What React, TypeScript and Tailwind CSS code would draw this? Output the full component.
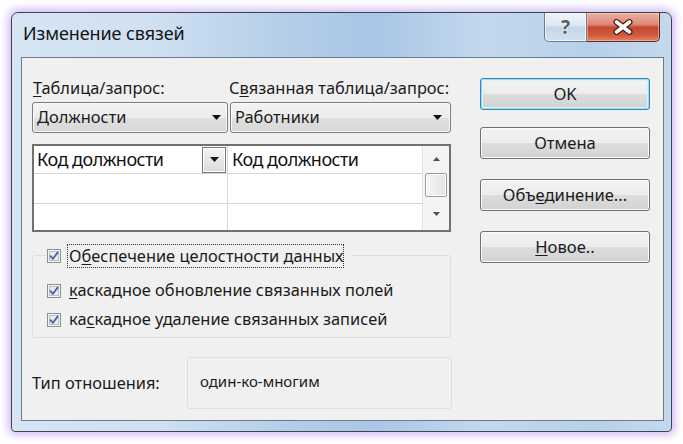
import React from "react";

const FONT = { fontFamily: '"Noto Sans", "Open Sans", sans-serif' };

function CheckBox() {
  return (
    <svg width="14" height="14" viewBox="0 0 14 14" className="shrink-0">
      <rect x="0.5" y="0.5" width="13" height="13" fill="#f6f6f6" stroke="#8e8f8f" />
      <rect x="2.5" y="2.5" width="9" height="9" fill="#e9ecef" stroke="#b8bec6" />
      <path d="M3.6 7.2 L5.9 9.8 L10.6 3.6" stroke="#4e66a0" strokeWidth="1.9" fill="none" strokeLinecap="round" strokeLinejoin="round" />
    </svg>
  );
}

function Arrow({ up = false }: { up?: boolean }) {
  return (
    <svg width="9" height="5" viewBox="0 0 9 5">
      <polygon points={up ? "0,5 9,5 4.5,0" : "0,0 9,0 4.5,5"} fill="#111" />
    </svg>
  );
}

function SmallArrow({ up = false }: { up?: boolean }) {
  return (
    <svg width="7" height="4" viewBox="0 0 7 4">
      <polygon points={up ? "0,4 7,4 3.5,0" : "0,0 7,0 3.5,4"} fill="#505050" />
    </svg>
  );
}

function Button({ children, focus = false, mt }: { children: React.ReactNode; focus?: boolean; mt: string }) {
  return (
    <div
      className={
        "h-[32px] w-[170px] rounded-[3px] border flex items-center justify-center text-[16.6px] text-[#1b1b1b] bg-[linear-gradient(180deg,#f3f3f3_0%,#ececec_50%,#dddddd_51%,#d2d2d2_100%)] " +
        (focus
          ? "border-[#3c7fb1] shadow-[inset_0_0_0_1px_#8fe0f8,inset_0_0_0_2px_#d8f3fb] "
          : "border-[#707070] shadow-[inset_0_0_0_1px_#fbfbfb] ") +
        mt
      }
    >
      {children}
    </div>
  );
}

export default function App() {
  return (
    <div className="w-[683px] h-[444px] bg-white overflow-hidden pl-[11px] pt-[12px]" style={FONT}>
      <div className="w-[661px] h-[420px] rounded-t-[7px] rounded-b-[4px] border border-[#3c4650] flex flex-col shadow-[0_0_8px_3px_rgba(196,168,238,0.8)] bg-[linear-gradient(90deg,#d6e5f4_0%,#cfe0f2_22%,#b6cfe9_40%,#a9c6e6_55%,#c3d8ee_72%,#b7d0ea_88%,#c4d9ee_100%)]">
        {/* title bar */}
        <div className="h-[44px] flex shrink-0">
          <div className="flex-1 pl-[11px] pb-[4px] flex items-center text-[18px] text-[#141414] tracking-[-0.1px]">
            Изменение связей
          </div>
          <div className="flex mr-[11px] h-[29px]">
            <div className="w-[43px] h-[29px] rounded-bl-[5px] border border-t-0 border-[#6d7e92] bg-[linear-gradient(180deg,#eef3f9_0%,#dde7f2_45%,#c6d6e8_50%,#d3e1ef_100%)] flex items-center justify-center shadow-[inset_0_0_0_1px_rgba(255,255,255,0.6)]">
              <span className="text-[19px] font-bold text-[#56606c] leading-none [text-shadow:0_0_2px_#fff,0_0_1px_#fff]">?</span>
            </div>
            <div className="w-[73px] h-[29px] rounded-br-[5px] border border-t-0 border-l-0 border-[#5b2a22] bg-[linear-gradient(180deg,#eab1a3_0%,#de8a76_40%,#c8462d_52%,#d05b3f_80%,#e3866a_100%)] flex items-center justify-center shadow-[inset_0_0_0_1px_rgba(255,220,210,0.45)]">
              <svg width="22" height="16" viewBox="0 0 22 16">
                <path d="M4.5 3 L17.5 13 M17.5 3 L4.5 13" stroke="#4b1d16" strokeWidth="6" strokeLinecap="round" />
                <path d="M4.5 3 L17.5 13 M17.5 3 L4.5 13" stroke="#ffffff" strokeWidth="3.6" strokeLinecap="round" />
              </svg>
            </div>
          </div>
        </div>

        {/* client area */}
        <div className="flex-1 ml-[9px] mr-[7px] mb-[10px] border border-[#6e7a88] bg-[#f0f0f0] flex pl-[10px] text-[16.4px] text-[#1b1b1b]">
          {/* left column */}
          <div className="w-[420px] flex flex-col">
            <div className="mt-[21px] h-[18px] flex items-center leading-[18px]">
              <div className="w-[197px] pl-[1px]">
                <span className="underline underline-offset-2">Т</span>аблица/запрос:
              </div>
              <div>
                С<span className="underline underline-offset-2">в</span>язанная таблица/запрос:
              </div>
            </div>

            <div className="mt-[5px] h-[31px] flex gap-[2px]">
              <div className="w-[196px] h-full rounded-[3px] border border-[#7d7d7d] bg-[linear-gradient(180deg,#f3f3f3_0%,#ececec_50%,#e0e0e0_51%,#d7d7d7_100%)] flex items-center pl-[4px] pr-[6px] shadow-[inset_0_0_0_1px_#fafafa]">
                <span className="flex-1">Должности</span>
                <Arrow />
              </div>
              <div className="w-[221px] h-full rounded-[3px] border border-[#7d7d7d] bg-[linear-gradient(180deg,#f3f3f3_0%,#ececec_50%,#e0e0e0_51%,#d7d7d7_100%)] flex items-center pl-[4px] pr-[8px] shadow-[inset_0_0_0_1px_#fafafa]">
                <span className="flex-1">Работники</span>
                <Arrow />
              </div>
            </div>

            {/* grid */}
            <div className="mt-[11px] w-[419px] h-[88px] border-2 border-[#707070] bg-white flex">
              <div className="w-[194px] border-r border-[#d6d6d6] flex flex-col">
                <div className="h-[27px] flex items-center pl-[3px] pr-[1px] border-b border-[#d6d6d6] box-content">
                  <span className="flex-1 text-[18px] tracking-[-0.5px] text-[#111]">Код должности</span>
                  <div className="w-[24px] h-[26px] border border-[#777] bg-[linear-gradient(180deg,#f4f4f4,#dcdcdc)] flex items-center justify-center shadow-[inset_0_0_0_1px_#fff]">
                    <Arrow />
                  </div>
                </div>
                <div className="h-[29px] border-b border-[#d6d6d6] box-content" />
                <div className="flex-1" />
              </div>
              <div className="w-[194px] flex flex-col">
                <div className="h-[27px] flex items-center pl-[4px] border-b border-[#d6d6d6] box-content">
                  <span className="text-[18px] tracking-[-0.5px] text-[#111]">Код должности</span>
                </div>
                <div className="h-[29px] border-b border-[#d6d6d6] box-content" />
                <div className="flex-1" />
              </div>
              <div className="flex-1 bg-[#f4f4f4] border-l border-[#e2e2e2] flex flex-col items-center">
                <div className="h-[26px] flex items-center justify-center">
                  <SmallArrow up />
                </div>
                <div className="w-[22px] h-[24px] mt-[1px] rounded-[2px] border border-[#9a9a9a] bg-[linear-gradient(90deg,#f6f6f6,#e2e2e2)] shadow-[inset_0_0_0_1px_#fff]" />
                <div className="flex-1 flex items-center justify-center">
                  <SmallArrow />
                </div>
              </div>
            </div>

            {/* group box */}
            <div className="relative mt-[23px] w-[419px] h-[83px] rounded-[3px] border border-[#d5dfe5] flex flex-col pt-[20px] pl-[14px]">
              <div className="absolute top-[-12px] left-[14px] h-[24px] flex items-center bg-[#f0f0f0] pr-[8px]">
                <CheckBox />
                <div className="ml-[6px] h-[24px] w-[277px] border border-dotted border-[#333] flex items-center pl-[1px] whitespace-nowrap">
                  О<span className="underline underline-offset-2">б</span>еспечение целостности данных
                </div>
              </div>
              <div className="h-[29px] flex items-center">
                <CheckBox />
                <span className="ml-[8px]">
                  <span className="underline underline-offset-2">к</span>аскадное обновление связанных полей
                </span>
              </div>
              <div className="h-[29px] flex items-center">
                <CheckBox />
                <span className="ml-[8px]">
                  ка<span className="underline underline-offset-2">с</span>кадное удаление связанных записей
                </span>
              </div>
            </div>

            {/* type row */}
            <div className="mt-[19px] h-[52px] flex items-center">
              <div className="w-[155px]">Тип отношения:</div>
              <div className="w-[265px] h-[52px] rounded-[3px] border border-[#d8e1e8] flex items-center pl-[12px] pb-[3px] text-[15px]">
                один-ко-многим
              </div>
            </div>
          </div>

          {/* right column */}
          <div className="ml-[28px] w-[170px] flex flex-col">
            <Button focus mt="mt-[20px]">OK</Button>
            <Button mt="mt-[17px]">Отмена</Button>
            <Button mt="mt-[20px]">
              <span>
                Объ<span className="underline underline-offset-2">е</span>динение...
              </span>
            </Button>
            <Button mt="mt-[20px]">
              <span>
                <span className="underline underline-offset-2">Н</span>овое..
              </span>
            </Button>
          </div>
        </div>
      </div>
    </div>
  );
}
